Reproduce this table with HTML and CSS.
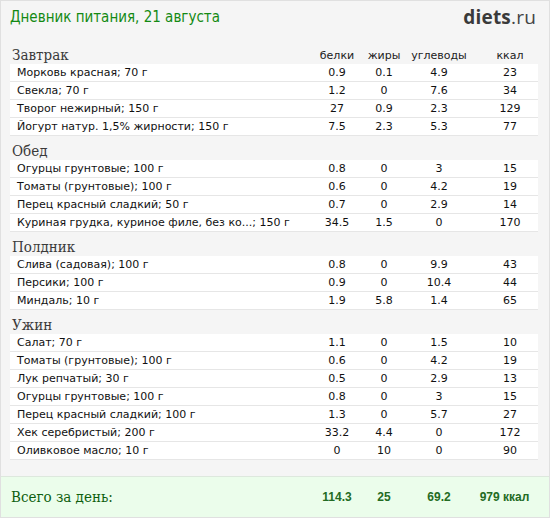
FILE: index.html
```html
<!DOCTYPE html>
<html lang="ru">
<head>
<meta charset="utf-8">
<link rel="stylesheet" href="styles.css">
</head>
<body>
<div class="page">
  <div class="top">
    <div class="title">Дневник питания, 21 августа</div>
    <div class="logo"><b>diets</b>.ru</div>
  </div>

  <div class="section">
    <div class="head">
      <div class="name">Завтрак</div>
      <div class="col">белки</div><div class="col">жиры</div><div class="col">углеводы</div><div class="col kcal">ккал</div>
    </div>
    <div class="row"><div class="name">Морковь красная; 70 г</div><div class="col">0.9</div><div class="col">0.1</div><div class="col">4.9</div><div class="col kcal">23</div></div>
    <div class="row"><div class="name">Свекла; 70 г</div><div class="col">1.2</div><div class="col">0</div><div class="col">7.6</div><div class="col kcal">34</div></div>
    <div class="row"><div class="name">Творог нежирный; 150 г</div><div class="col">27</div><div class="col">0.9</div><div class="col">2.3</div><div class="col kcal">129</div></div>
    <div class="row"><div class="name">Йогурт натур. 1,5% жирности; 150 г</div><div class="col">7.5</div><div class="col">2.3</div><div class="col">5.3</div><div class="col kcal">77</div></div>
  </div>

  <div class="section">
    <div class="head"><div class="name">Обед</div></div>
    <div class="row"><div class="name">Огурцы грунтовые; 100 г</div><div class="col">0.8</div><div class="col">0</div><div class="col">3</div><div class="col kcal">15</div></div>
    <div class="row"><div class="name">Томаты (грунтовые); 100 г</div><div class="col">0.6</div><div class="col">0</div><div class="col">4.2</div><div class="col kcal">19</div></div>
    <div class="row"><div class="name">Перец красный сладкий; 50 г</div><div class="col">0.7</div><div class="col">0</div><div class="col">2.9</div><div class="col kcal">14</div></div>
    <div class="row"><div class="name">Куриная грудка, куриное филе, без ко...; 150 г</div><div class="col">34.5</div><div class="col">1.5</div><div class="col">0</div><div class="col kcal">170</div></div>
  </div>

  <div class="section">
    <div class="head"><div class="name">Полдник</div></div>
    <div class="row"><div class="name">Слива (садовая); 100 г</div><div class="col">0.8</div><div class="col">0</div><div class="col">9.9</div><div class="col kcal">43</div></div>
    <div class="row"><div class="name">Персики; 100 г</div><div class="col">0.9</div><div class="col">0</div><div class="col">10.4</div><div class="col kcal">44</div></div>
    <div class="row"><div class="name">Миндаль; 10 г</div><div class="col">1.9</div><div class="col">5.8</div><div class="col">1.4</div><div class="col kcal">65</div></div>
  </div>

  <div class="section">
    <div class="head"><div class="name">Ужин</div></div>
    <div class="row"><div class="name">Салат; 70 г</div><div class="col">1.1</div><div class="col">0</div><div class="col">1.5</div><div class="col kcal">10</div></div>
    <div class="row"><div class="name">Томаты (грунтовые); 100 г</div><div class="col">0.6</div><div class="col">0</div><div class="col">4.2</div><div class="col kcal">19</div></div>
    <div class="row"><div class="name">Лук репчатый; 30 г</div><div class="col">0.5</div><div class="col">0</div><div class="col">2.9</div><div class="col kcal">13</div></div>
    <div class="row"><div class="name">Огурцы грунтовые; 100 г</div><div class="col">0.8</div><div class="col">0</div><div class="col">3</div><div class="col kcal">15</div></div>
    <div class="row"><div class="name">Перец красный сладкий; 100 г</div><div class="col">1.3</div><div class="col">0</div><div class="col">5.7</div><div class="col kcal">27</div></div>
    <div class="row"><div class="name">Хек серебристый; 200 г</div><div class="col">33.2</div><div class="col">4.4</div><div class="col">0</div><div class="col kcal">172</div></div>
    <div class="row"><div class="name">Оливковое масло; 10 г</div><div class="col">0</div><div class="col">10</div><div class="col">0</div><div class="col kcal">90</div></div>
  </div>

  <div class="spacer"></div>

  <div class="total">
    <div class="name">Всего за день:</div>
    <div class="col">114.3</div><div class="col">25</div><div class="col">69.2</div><div class="col kcal">979 ккал</div>
  </div>
</div>
</body>
</html>
```

FILE: styles.css
```css
html, body {
  margin: 0;
  padding: 0;
  background: #f5f5f5;
}

.page {
  width: 550px;
  height: 518px;
  box-sizing: border-box;
  border: 1px solid #e0e0e0;
  background: #f5f5f5;
  display: flex;
  flex-direction: column;
  overflow: hidden;
}

.top {
  height: 39px;
  display: flex;
  justify-content: space-between;
  align-items: flex-start;
  padding: 0 13px 0 9px;
}

.title {
  font-family: "DejaVu Sans", Verdana, sans-serif;
  font-stretch: condensed;
  font-size: 15px;
  color: #138a13;
  line-height: 20px;
  padding-top: 6px;
}

.logo {
  font-family: "Open Sans", "Liberation Sans", sans-serif;
  font-size: 19px;
  color: #444;
  line-height: 24px;
  padding-top: 4px;
  letter-spacing: 0.2px;
}

.logo b {
  font-weight: 700;
  color: #3a3a3a;
}

.section {
  display: flex;
  flex-direction: column;
  margin: 0 11px 0 9px;
}

.head, .row, .total {
  display: grid;
  grid-template-columns: 1fr 48px 46px 64px 67px;
  align-items: center;
}

.head {
  height: 24px;
  box-sizing: border-box;
  padding-top: 6px;
}

.head .name {
  font-family: "DejaVu Serif", "Liberation Serif", serif;
  font-stretch: condensed;
  font-size: 15px;
  color: #3a3a3a;
  padding-left: 2px;
  line-height: 17px;
}

.head .col {
  font-family: "DejaVu Sans", Verdana, sans-serif;
  font-size: 11px;
  color: #222;
  text-align: center;
  line-height: 17px;
}

.row {
  height: 18px;
  box-sizing: border-box;
  background: #fff;
  border-bottom: 1px solid #e6e6e6;
  font-family: "DejaVu Sans", Verdana, sans-serif;
  font-size: 11px;
  color: #111;
  line-height: 17px;
}

.row .name {
  padding-left: 7px;
  white-space: nowrap;
}

.col {
  text-align: center;
}

.row .kcal, .head .kcal {
  padding-left: 11px;
}

.spacer {
  flex: 1;
}

.total {
  height: 41px;
  box-sizing: border-box;
  background: #ebfdeb;
  border-top: 1px solid #dde8dd;
  padding: 0 11px 0 9px;
}

.total .name {
  font-family: "DejaVu Serif", "Liberation Serif", serif;
  font-stretch: condensed;
  font-size: 15px;
  color: #0f5f0f;
  padding-left: 1px;
}

.total .col {
  font-family: "Liberation Sans", Arial, sans-serif;
  font-weight: 700;
  font-size: 12px;
  color: #236b23;
}
```
